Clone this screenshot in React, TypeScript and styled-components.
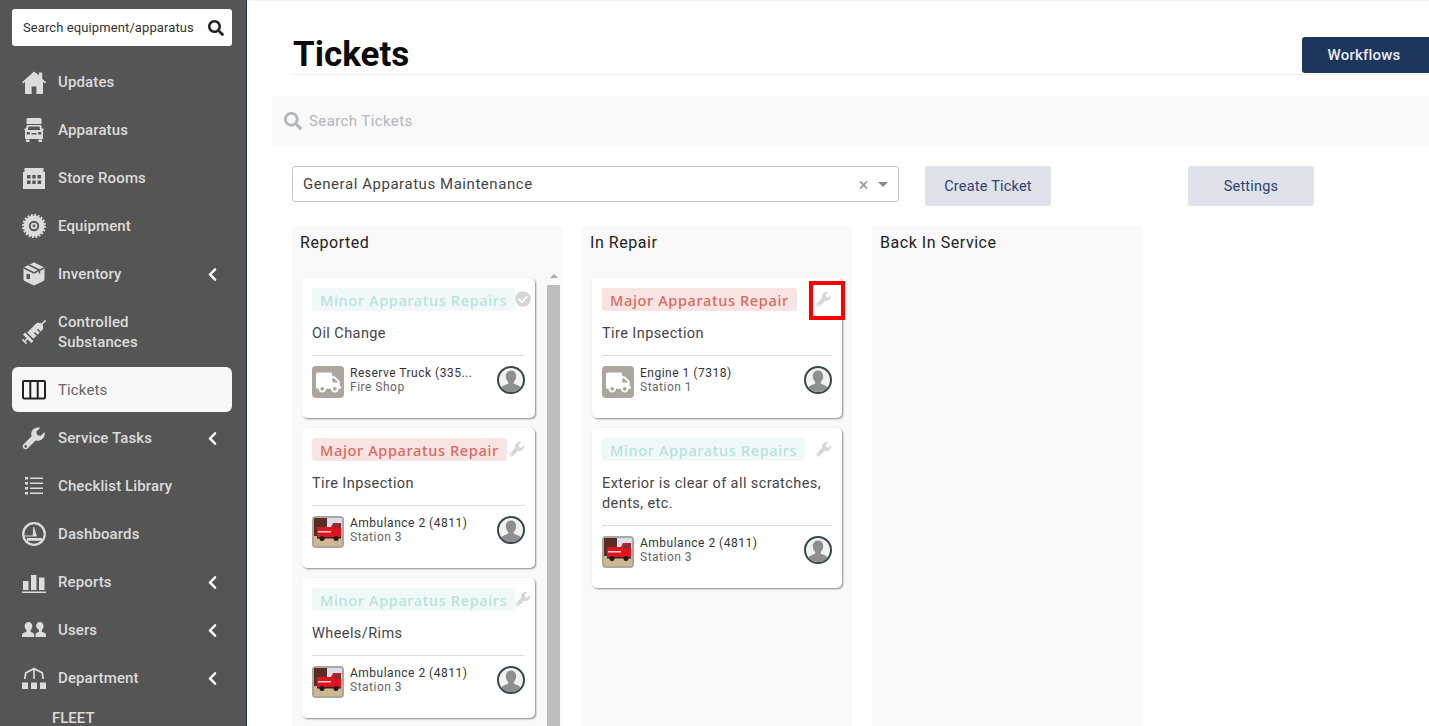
import React from "react"
import styled, { createGlobalStyle } from "styled-components"
import { FaCheckCircle, FaChevronLeft, FaSearch, FaSyringe, FaTruck } from "react-icons/fa"

const GlobalStyle = createGlobalStyle`
  * {
    box-sizing: border-box;
  }
  html, body {
    margin: 0;
    height: 100%;
    overflow: hidden;
    font-family: Roboto, "Liberation Sans", sans-serif;
    background-color: #fff;
  }
`

const HomeIcon = () => (
  <svg viewBox="0 0 24 24" width="24" height="24" fill="currentColor">
    <path d="M12 1.500 0 12.200l1 1.300 2-1.700V24h6.600v-7.500h4.800V24H21V11.800l2 1.700 1-1.300-3.800-3.400V2.500h-3.400v2.800z" />
  </svg>
)

const TruckFrontIcon = () => (
  <svg viewBox="0 0 24 24" width="24" height="24" fill="currentColor">
    <path d="M6 0h12a1.500 1.500 0 0 1 1.500 1.500V6h-15V1.500A1.500 1.500 0 0 1 6 0z" />
    <path fillRule="evenodd" d="M5 7h14l1 3.500h1.500v1.500h-.5v9H3v-9h-.5v-1.500H4zM6.500 8.500 5.800 12h12.400l-.7-3.500zM4.800 14v2.500h3V14zm11.400 0v2.500h3V14zM9.500 15v1.500h5V15z" />
    <path d="M4 21.500h3.500V24H4zM16.500 21.500H20V24h-3.500z" />
  </svg>
)

const StoreIcon = () => (
  <svg viewBox="0 0 24 24" width="24" height="24" fill="currentColor">
    <path fillRule="evenodd" d="M2.500 2h19v4H23v17H1V6h1.500zM5 9v3.500h3.500V9zm5.300 0v3.500h3.400V9zm5.200 0v3.500H19V9zM5 14.500V18h3.500v-3.500zm5.300 0V18h3.400v-3.500zm5.200 0V18H19v-3.500z" />
  </svg>
)

const BladeIcon = () => (
  <svg viewBox="0 0 24 24" width="24" height="24" fill="currentColor">
    <circle cx="12" cy="12" r="10.400" />
    <circle cx="12" cy="12" r="11" fill="none" stroke="currentColor" strokeWidth="2" strokeDasharray="2 1.450" />
    <circle cx="12" cy="12" r="5.200" fill="#555" />
    <circle cx="12" cy="12" r="3.300" />
    <circle cx="12" cy="12" r="1.400" fill="#555" />
  </svg>
)

const BoxIcon = () => (
  <svg viewBox="0 0 24 24" width="24" height="24">
    <path
      d="M10.800.9c.8-.4 1.600-.4 2.400 0l8.300 4c.6.300 1 .9 1 1.600v10.800c0 .7-.4 1.300-1 1.600l-8.300 4.100c-.8.400-1.600.4-2.400 0l-8.300-4.100c-.6-.3-1-.9-1-1.600V6.500c0-.7.4-1.300 1-1.600z"
      fill="currentColor"
    />
    <path d="M2 6l10 5 10-5M7 3l10.500 5v3.500" fill="none" stroke="#555" strokeWidth="1.500" />
    <path d="M4.500 12h3.500v5H4.500z" fill="#555" />
  </svg>
)

const TicketsIcon = () => (
  <svg viewBox="0 0 24 20" width="24" height="20" fill="none" stroke="#222" strokeWidth="2">
    <rect x="1" y="1" width="22" height="17.500" rx="1" />
    <path d="M8.300 1v17.500M15.700 1v17.500" />
  </svg>
)

const WrenchIcon = ({ size = 24 }: { size?: number }) => (
  <svg viewBox="0 0 24 24" width={size} height={size} fill="currentColor">
    <path
      fillRule="evenodd"
      d="M22.500 6l-4 4-3.300-.9-.9-3.300 4-4c-3-.9-6.100 0-7.800 2.300-1.400 1.900-1.600 4.200-.9 6.100L1.600 18.300c-1.200 1.200-1.200 3 0 4.100 1.200 1.100 2.900 1.100 4 0l8-7.900c2 .7 4.300.4 6.100-.9 2.400-1.800 3.700-4.600 2.800-7.600zM3.700 19.100a1.300 1.300 0 1 1 0 2.600 1.300 1.300 0 0 1 0-2.600z"
    />
  </svg>
)

const ListIcon = () => (
  <svg viewBox="0 0 24 24" width="24" height="24" fill="currentColor">
    <path d="M3 3h3v2.500H3zM8 3.500h13V5H8zM3 8h3v2.500H3zM8 8.500h13V10H8zM3 13h3v2.500H3zM8 13.500h13V15H8zM3 18h3v2.500H3zM8 18.500h13V20H8z" />
  </svg>
)

const GaugeIcon = () => (
  <svg viewBox="0 0 24 24" width="24" height="24" fill="currentColor">
    <circle cx="12" cy="12" r="10.800" fill="none" stroke="currentColor" strokeWidth="2.200" />
    <path d="M1 13.500h9.700L11.300 5h.8l2.600 8.500v1H1z" />
    <path d="M5 16h15v2.800H5z" />
  </svg>
)

const BarsIcon = () => (
  <svg viewBox="0 0 24 24" width="24" height="24" fill="currentColor">
    <path d="M1 11h5.500v9H1zM9 5h5.500v15H9zM17 7.500h5.500V20H17zM0 21.500h24V23H0z" />
  </svg>
)

const UsersIcon = () => (
  <svg viewBox="0 0 24 24" width="24" height="24" fill="currentColor">
    <path d="M6.500 4c2.300 0 3.800 1.700 3.800 4.100 0 1.700-.7 3.200-1.700 4.100v1.500c1.400.6 3 1.100 3.400 2.400.2.700.2 1.900.2 2.900H0c0-1 0-2.200.2-2.900.4-1.300 2.700-1.800 4.200-2.400v-1.500c-1-.9-1.700-2.400-1.700-4.100C2.700 5.700 4.200 4 6.500 4z" />
    <path d="M17.800 4c2.300 0 3.700 1.700 3.700 4.100 0 1.700-.7 3.200-1.700 4.100v1.500c1.500.6 3.800 1.100 4 2.400.2.700.2 1.900.2 2.900H13.500c0-1 0-2.200.2-2.900.3-1.300 1.900-1.800 3.300-2.400v-1.500c-1-.9-2.900-2.400-2.900-4.100 0-2.400 1.400-4.100 3.700-4.100z" />
  </svg>
)

const DepartmentIcon = () => (
  <svg viewBox="0 0 24 24" width="24" height="24" fill="currentColor">
    <path d="M12 1.500 3 6.200 1.800 13h1.800l.9-5.600L11.200 4v9h1.600V4l6.700 3.400.9 5.600h1.800L21 6.200z" />
    <path d="M0 16.500h6V23H0zM9 16.500h6V23H9zM18 16.500h6V23h-6z" />
  </svg>
)

const AVATAR = (
  <svg viewBox="0 0 28 28" width="28" height="28">
    <circle cx="14" cy="14" r="13" fill="#f2f2f2" stroke="#37474b" strokeWidth="2" />
    <path
      d="M14 4.500c3.300 0 5.200 2.500 5.200 5.800 0 2.400-1 4.400-2.400 5.700v1.800c2.700 1 5.500 1.800 6.900 3.800A11.800 11.800 0 0 1 14 26c-3.800 0-7.300-1.700-9.700-4.400 1.400-2 4.200-2.800 6.900-3.800V16c-1.400-1.300-2.400-3.300-2.400-5.700 0-3.300 1.900-5.800 5.200-5.800z"
      fill="#8f8f8f"
    />
  </svg>
)

const navItems = [
  { label: "Updates", icon: <HomeIcon /> },
  { label: "Apparatus", icon: <TruckFrontIcon /> },
  { label: "Store Rooms", icon: <StoreIcon /> },
  { label: "Equipment", icon: <BladeIcon /> },
  { label: "Inventory", icon: <BoxIcon />, sub: true },
  { label: "Controlled Substances", icon: <FaSyringe size={24} style={{ transform: "rotate(180deg)" }} />, tall: true },
  { label: "Tickets", icon: <TicketsIcon />, active: true },
  { label: "Service Tasks", icon: <WrenchIcon />, sub: true },
  { label: "Checklist Library", icon: <ListIcon /> },
  { label: "Dashboards", icon: <GaugeIcon /> },
  { label: "Reports", icon: <BarsIcon />, sub: true },
  { label: "Users", icon: <UsersIcon />, sub: true },
  { label: "Department", icon: <DepartmentIcon />, sub: true },
]

type Ticket = {
  kind: "major" | "minor"
  title: string
  unit: string
  place: string
  photo?: boolean
  done?: boolean
  flagged?: boolean
}

const columns: { title: string; scroll?: boolean; tickets: Ticket[] }[] = [
  {
    title: "Reported",
    scroll: true,
    tickets: [
      { kind: "minor", title: "Oil Change", unit: "Reserve Truck (335...", place: "Fire Shop", done: true },
      { kind: "major", title: "Tire Inpsection", unit: "Ambulance 2 (4811)", place: "Station 3", photo: true },
      { kind: "minor", title: "Wheels/Rims", unit: "Ambulance 2 (4811)", place: "Station 3", photo: true },
    ],
  },
  {
    title: "In Repair",
    tickets: [
      { kind: "major", title: "Tire Inpsection", unit: "Engine 1 (7318)", place: "Station 1", flagged: true },
      {
        kind: "minor",
        title: "Exterior is clear of all scratches, dents, etc.",
        unit: "Ambulance 2 (4811)",
        place: "Station 3",
        photo: true,
      },
    ],
  },
  { title: "Back In Service", tickets: [] },
]

const AmbulancePhoto = () => (
  <svg viewBox="0 0 28 28" width="28" height="28">
    <rect width="28" height="28" fill="#cdb892" />
    <rect width="28" height="10" fill="#d5dfee" />
    <rect width="13" height="18" fill="#5a2c24" />
    <path d="M3 9h14l2-4h8v15H3z" fill="#e0141e" />
    <path d="M20 6.500h7v4h-8z" fill="#7d3038" />
    <rect x="4" y="13" width="13" height="1.500" fill="#f4c9c9" />
    <rect x="3" y="19" width="24" height="1.500" fill="#4a1a1c" />
    <circle cx="8" cy="20.500" r="2.500" fill="#1c1c1c" />
    <circle cx="22" cy="20.500" r="2.500" fill="#1c1c1c" />
  </svg>
)

const TicketCard = ({ ticket }: { ticket: Ticket }) => (
  <Card>
    <CardHead>
      <Badge $kind={ticket.kind}>
        {ticket.kind === "major" ? "Major Apparatus Repair" : "Minor Apparatus Repairs"}
      </Badge>
      <StatusIcon>
        {ticket.done ? <FaCheckCircle size={16} /> : <WrenchIcon size={16} />}
      </StatusIcon>
    </CardHead>
    <TicketTitle>{ticket.title}</TicketTitle>
    <CardFoot>
      <Thumb>
        {ticket.photo ? <AmbulancePhoto /> : <FaTruck size={25} color="#fff" />}
      </Thumb>
      <UnitText>
        <UnitName>{ticket.unit}</UnitName>
        <UnitPlace>{ticket.place}</UnitPlace>
      </UnitText>
      {AVATAR}
    </CardFoot>
    {ticket.flagged && <RedMark />}
  </Card>
)

const App = () => {
  return (
    <Page>
      <GlobalStyle />
      <Sidebar>
        <SideSearch>
          <span>Search equipment/apparatus</span>
          <FaSearch size={16} color="#222" />
        </SideSearch>
        <Nav>
          {navItems.map((item) => (
            <NavItem key={item.label} $active={item.active} $tall={item.tall}>
              <NavIcon>{item.icon}</NavIcon>
              <NavLabel $active={item.active}>{item.label}</NavLabel>
              {item.sub && (
                <Chevron>
                  <FaChevronLeft size={15} />
                </Chevron>
              )}
            </NavItem>
          ))}
        </Nav>
        <NavSection>FLEET</NavSection>
      </Sidebar>
      <Main>
        <Header>
          <Title>Tickets</Title>
          <Workflows>Workflows</Workflows>
        </Header>
        <SearchBar>
          <FaSearch size={18} color="#b4b5bd" />
          <span>Search Tickets</span>
        </SearchBar>
        <Controls>
          <Select>
            <span>General Apparatus Maintenance</span>
            <SelectClear>×</SelectClear>
            <SelectCaret />
          </Select>
          <GreyButton>Create Ticket</GreyButton>
          <SettingsButton>Settings</SettingsButton>
        </Controls>
        <Board>
          {columns.map((col) => (
            <Column key={col.title}>
              <ColumnTitle>{col.title}</ColumnTitle>
              <ColumnBody>
                <CardList>
                  {col.tickets.map((t) => (
                    <TicketCard key={t.title + t.unit} ticket={t} />
                  ))}
                </CardList>
                {col.scroll && (
                  <ScrollBar>
                    <ScrollArrow />
                    <ScrollThumb />
                  </ScrollBar>
                )}
              </ColumnBody>
            </Column>
          ))}
        </Board>
      </Main>
    </Page>
  )
}

const Page = styled.div`
  display: flex;
  width: 100%;
  height: 726px;
  overflow: hidden;
`

const Sidebar = styled.aside`
  flex: 0 0 247px;
  height: 726px;
  padding: 9px 14px 0 12px;
  overflow: hidden;

  background-color: #555;
  border-right: 1px solid #1f365c;
`

const SideSearch = styled.div`
  height: 37px;
  padding: 0 8px 0 11px;

  display: flex;
  align-items: center;
  justify-content: space-between;

  font-size: 13px;
  letter-spacing: 0.1px;
  color: #333;

  border-radius: 3px;
  background-color: #fff;
`

const Nav = styled.nav`
  margin-top: 12px;
`

const NavItem = styled.div<{ $active?: boolean; $tall?: boolean }>`
  height: ${(p) => (p.$active ? "45px" : p.$tall ? "69px" : "48px")};
  margin-bottom: ${(p) => (p.$active ? "2px" : "0")};
  padding-left: 10px;
  padding-bottom: ${(p) => (p.$tall ? "2px" : "0")};

  display: flex;
  align-items: center;

  color: ${(p) => (p.$active ? "#666" : "#dcdcdc")};

  border-radius: 6px;
  background-color: ${(p) => (p.$active ? "#f8f8f8" : "transparent")};
`

const NavIcon = styled.div`
  flex: 0 0 24px;
  height: 24px;
  margin-right: 12px;

  display: flex;
  align-items: center;
  justify-content: center;
`

const NavLabel = styled.div<{ $active?: boolean }>`
  width: 125px;

  font-size: 15px;
  font-weight: ${(p) => (p.$active ? 400 : 500)};
  line-height: 20px;
  letter-spacing: 0.12px;
`

const Chevron = styled.div`
  margin-left: auto;
  margin-right: 12px;

  display: flex;

  color: #fff;
`

const NavSection = styled.div`
  margin: 8px 0 0 40px;

  font-size: 15px;
  font-weight: 500;
  line-height: 16px;
  color: #dcdcdc;
`

const Main = styled.main`
  flex: 1;
  min-width: 0;
  height: 726px;
  overflow: hidden;

  border-top: 1px solid #f2f2f2;
`

const Header = styled.header`
  height: 74px;
  margin-left: 45px;

  display: flex;
  align-items: flex-end;
  justify-content: space-between;

  border-bottom: 1px solid #eee;
`

const Title = styled.h1`
  margin: 0 0 -1px 1px;

  font-size: 35px;
  font-weight: 700;
  line-height: 40px;
  color: #0b0b0b;
`

const Workflows = styled.button`
  width: 127px;
  height: 36px;
  margin-bottom: 1px;
  padding: 0 3px 0 0;

  font-family: inherit;
  font-size: 15px;
  font-weight: 500;
  letter-spacing: 0.2px;
  color: #e8ebf0;

  border: none;
  border-radius: 3px 0 0 3px;
  background-color: #1f365c;
`

const SearchBar = styled.div`
  height: 50px;
  margin: 21px 0 0 25px;
  padding-left: 12px;

  display: flex;
  align-items: center;
  gap: 7px;

  font-size: 15px;
  letter-spacing: 0.4px;
  color: #b4b5bd;

  border-radius: 3px;
  background-color: #f9f9f9;
`

const Controls = styled.div`
  margin: 20px 0 0 45px;

  display: flex;
  align-items: flex-start;
`

const Select = styled.div`
  width: 607px;
  height: 36px;
  padding: 0 10px;

  display: flex;
  align-items: center;

  font-size: 15px;
  letter-spacing: 0.55px;
  color: #444;

  border: 1px solid #c4c4c4;
  border-radius: 3px;

  span:first-child {
    flex: 1;
  }
`

const SelectClear = styled.span`
  margin-right: 9px;

  font-size: 18px;
  color: #999;
`

const SelectCaret = styled.span`
  width: 0;
  height: 0;

  border-top: 5px solid #888;
  border-left: 5px solid transparent;
  border-right: 5px solid transparent;
`

const GreyButton = styled.button`
  width: 126px;
  height: 40px;
  margin-left: 26px;

  font-family: inherit;
  font-size: 14.5px;
  letter-spacing: 0.2px;
  color: #2d4470;

  border: none;
  border-radius: 3px;
  background-color: #dfe2e8;
`

const SettingsButton = styled(GreyButton)`
  margin-left: 137px;
`

const Board = styled.div`
  margin: 20px 0 0 45px;

  display: flex;
  gap: 20px;
`

const Column = styled.section`
  flex: 0 0 270px;
  min-width: 0;
  height: 520px;

  border-radius: 3px;
  background-color: #f9f9f9;
`

const ColumnTitle = styled.div`
  height: 42px;
  padding: 7px 0 0 8px;

  font-size: 16px;
  line-height: 19px;
  letter-spacing: 0.55px;
  color: #222;
`

const ColumnBody = styled.div`
  display: flex;
  align-items: flex-start;
`

const CardList = styled.div`
  margin: 10px 10px 0 10px;
  flex: 1;
  min-width: 0;

  display: flex;
  flex-direction: column;
  gap: 10px;
`

const Card = styled.article`
  position: relative;
  padding: 10px 10px 20px;

  border-radius: 5px;
  background-color: #fff;
  box-shadow: 1px 1px 2px rgba(0, 0, 0, 0.45);
`

const CardHead = styled.div`
  display: flex;
  align-items: flex-start;
  justify-content: space-between;
`

const Badge = styled.span<{ $kind: "major" | "minor" }>`
  flex-shrink: 0;
  height: 23px;
  padding: 0 8px;

  font-family: "Noto Sans", sans-serif;
  font-size: 14.5px;
  font-weight: 500;
  line-height: 24px;
  letter-spacing: 0.65px;
  white-space: nowrap;
  color: ${(p) => (p.$kind === "major" ? "#db6a62" : "#b5e3de")};

  border-radius: 3px;
  background-color: ${(p) => (p.$kind === "major" ? "#f8e4e2" : "#f1f9f8")};
`

const StatusIcon = styled.div`
  flex-shrink: 0;
  width: 16px;
  margin-top: 3px;

  display: flex;

  color: #d6d6d6;
`

const TicketTitle = styled.div`
  margin-top: 13px;
  padding-bottom: 11px;

  font-size: 14.5px;
  line-height: 20px;
  letter-spacing: 0.42px;
  color: #444;

  border-bottom: 1px solid #ddd;
`

const CardFoot = styled.div`
  margin-top: 10px;

  display: flex;
  align-items: flex-start;
`

const Thumb = styled.div`
  flex: 0 0 32px;
  height: 32px;

  display: flex;
  align-items: center;
  justify-content: center;
  overflow: hidden;

  border-radius: 4px;
  background-color: #aba79e;
`

const UnitText = styled.div`
  flex: 1;
  min-width: 0;
  margin-left: 6px;
`

const UnitName = styled.div`
  font-size: 12px;
  line-height: 14px;
  letter-spacing: 0.5px;
  white-space: nowrap;
  color: #333;
`

const UnitPlace = styled.div`
  font-size: 12px;
  line-height: 14px;
  letter-spacing: 0.5px;
  color: #666;
`

const RedMark = styled.div`
  position: absolute;
  top: 3px;
  right: -3px;
  width: 36px;
  height: 39px;

  border: 4px solid #f00;
`

const ScrollBar = styled.div`
  flex: 0 0 13px;
  margin: 0 2px 0 2px;

  display: flex;
  flex-direction: column;
`

const ScrollArrow = styled.div`
  height: 17px;

  &::before {
    content: "";
    display: block;
    width: 0;
    height: 0;
    margin: 6px auto 0;
    border-bottom: 4px solid #aaa;
    border-left: 4px solid transparent;
    border-right: 4px solid transparent;
  }
`

const ScrollThumb = styled.div`
  height: 460px;

  background-color: #bdbdbd;
`

export default App
